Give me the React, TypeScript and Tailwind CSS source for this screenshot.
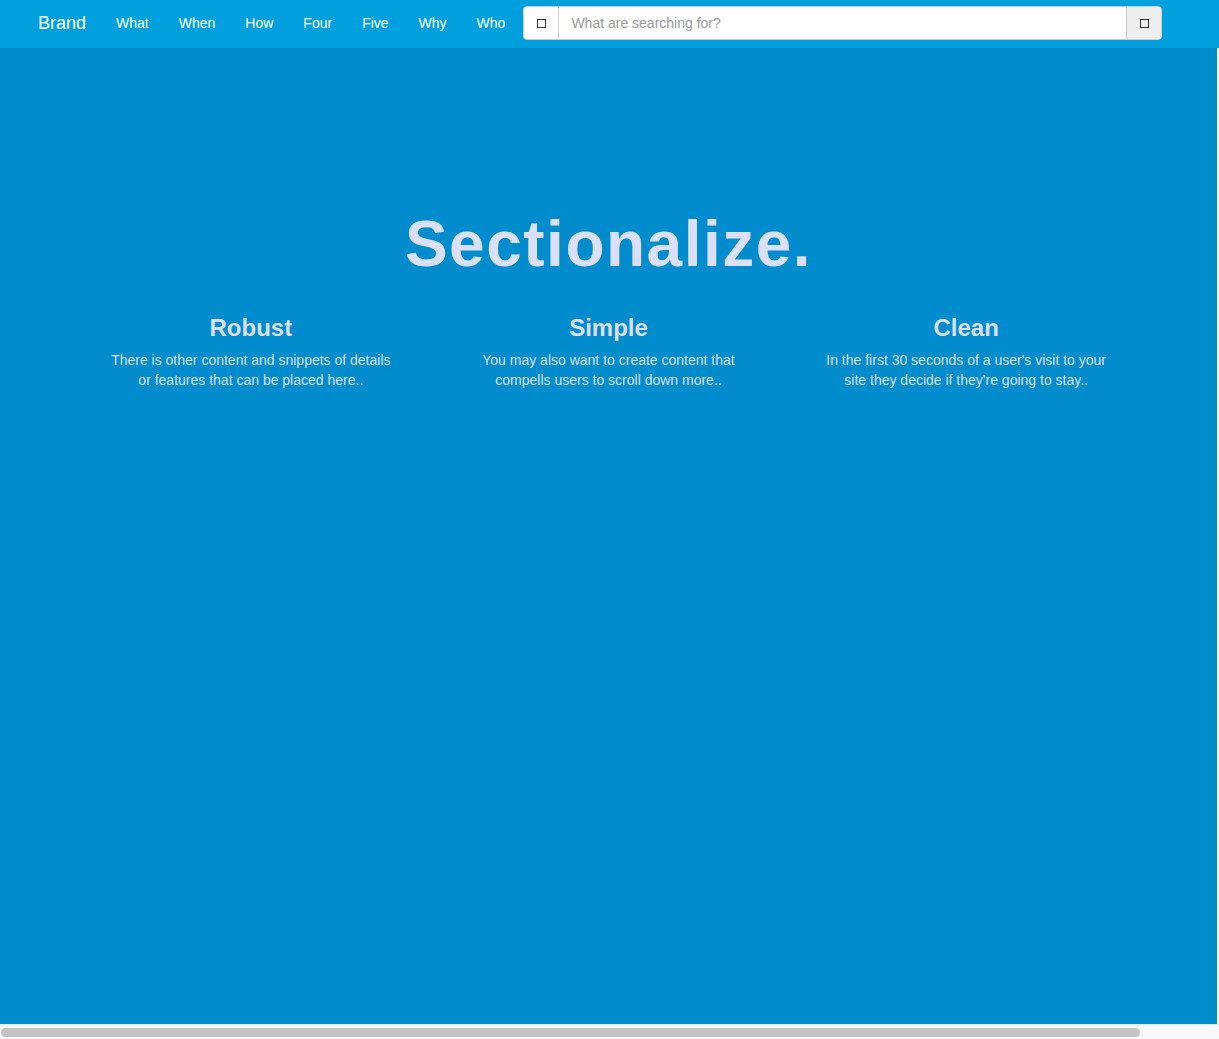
const NAV_LINKS = ["What", "When", "How", "Four", "Five", "Why", "Who"];

const FEATURES = [
  {
    title: "Robust",
    text: "There is other content and snippets of details or features that can be placed here..",
  },
  {
    title: "Simple",
    text: "You may also want to create content that compells users to scroll down more..",
  },
  {
    title: "Clean",
    text: "In the first 30 seconds of a user's visit to your site they decide if they're going to stay..",
  },
];

// missing-glyph style box used by the search addons
const GlyphBox = () => <span className="block w-[9px] h-[9px] border-[1.5px] border-[#333]" />;

const App = () => {
  return (
    <div className="w-[1219px] h-[1039px] overflow-hidden flex flex-col font-['Liberation_Sans',Arial,sans-serif]">
      {/* Navbar */}
      <nav className="h-12 shrink-0 bg-[#009fde] flex items-center pl-[23px] pb-[2px]">
        <a className="px-[15px] text-[18px] text-white leading-[20px]">Brand</a>
        <ul className="flex">
          {NAV_LINKS.map(link => (
            <li key={link}>
              <a className="block px-[15px] text-[14px] text-white leading-[20px]">{link}</a>
            </li>
          ))}
        </ul>
        <form className="ml-[3px] flex h-[34px] w-[639px] rounded-[4px] border border-[#ccc] bg-white overflow-hidden">
          <span className="w-[35px] flex items-center justify-center border-r border-[#ccc] bg-white">
            <GlyphBox />
          </span>
          <input
            className="flex-1 px-3 text-[14px] text-[#555] placeholder:text-[#999] outline-none"
            placeholder="What are searching for?"
          />
          <span className="w-[35px] flex items-center justify-center border-l border-[#ccc] bg-[#eee]">
            <GlyphBox />
          </span>
        </form>
      </nav>

      {/* Hero */}
      <main className="flex-1 bg-[#008ccd] mr-[2px] pt-[161px] text-[#dcdffb]">
        <h1 className="text-center text-[64px] font-bold leading-[70px] tracking-[1.5px]">Sectionalize.</h1>
        <div className="mt-[36px] mx-auto w-[1073px] grid grid-cols-3">
          {FEATURES.map(f => (
            <div key={f.title} className="flex flex-col items-center text-center">
              <h3 className="text-[24px] font-bold leading-[26px]">{f.title}</h3>
              <p className="mt-[9px] w-[292px] text-[14px] leading-[20px]">{f.text}</p>
            </div>
          ))}
        </div>
      </main>

      {/* Horizontal scrollbar */}
      <div className="h-[15px] shrink-0 bg-[#f8f8f8] border-t border-[#e6e6e6] pt-[3px]">
        <div className="ml-px w-[1139px] h-[9px] rounded-full bg-[#c2c2c2]" />
      </div>
    </div>
  );
};

export default App;
